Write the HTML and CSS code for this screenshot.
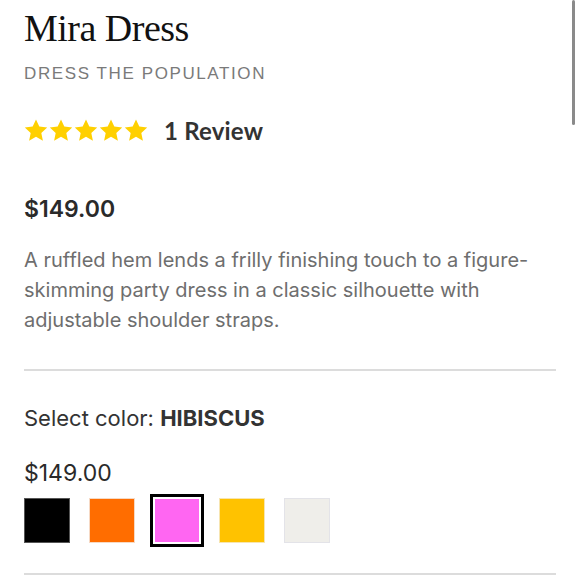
FILE: index.html
```html
<!DOCTYPE html>
<html lang="en">
<head>
<meta charset="utf-8">
<title>Mira Dress</title>
<link rel="stylesheet" href="styles.css">
</head>
<body>
<main class="product">
  <h1 class="title">Mira Dress</h1>
  <div class="brand">DRESS THE POPULATION</div>
  <div class="rating">
    <div class="stars">
      <svg class="star" viewBox="0 0 24 23"><polygon points="12,0.5 15.3,7.6 23.2,8.5 17.3,13.9 18.9,21.8 12,17.8 5.1,21.8 6.7,13.9 0.8,8.5 8.7,7.6"/></svg>
      <svg class="star" viewBox="0 0 24 23"><polygon points="12,0.5 15.3,7.6 23.2,8.5 17.3,13.9 18.9,21.8 12,17.8 5.1,21.8 6.7,13.9 0.8,8.5 8.7,7.6"/></svg>
      <svg class="star" viewBox="0 0 24 23"><polygon points="12,0.5 15.3,7.6 23.2,8.5 17.3,13.9 18.9,21.8 12,17.8 5.1,21.8 6.7,13.9 0.8,8.5 8.7,7.6"/></svg>
      <svg class="star" viewBox="0 0 24 23"><polygon points="12,0.5 15.3,7.6 23.2,8.5 17.3,13.9 18.9,21.8 12,17.8 5.1,21.8 6.7,13.9 0.8,8.5 8.7,7.6"/></svg>
      <svg class="star" viewBox="0 0 24 23"><polygon points="12,0.5 15.3,7.6 23.2,8.5 17.3,13.9 18.9,21.8 12,17.8 5.1,21.8 6.7,13.9 0.8,8.5 8.7,7.6"/></svg>
    </div>
    <span class="reviews">1 Review</span>
  </div>
  <div class="price">$149.00</div>
  <p class="desc">A ruffled hem lends a frilly finishing touch to a figure-skimming party dress in a classic silhouette with adjustable shoulder straps.</p>
  <hr class="divider">
  <div class="select">Select color: <strong class="color-name">HIBISCUS</strong></div>
  <div class="variant-price">$149.00</div>
  <div class="swatches">
    <span class="swatch swatch-black"></span>
    <span class="swatch swatch-orange"></span>
    <span class="swatch swatch-pink is-selected"></span>
    <span class="swatch swatch-yellow"></span>
    <span class="swatch swatch-white"></span>
  </div>
  <hr class="divider divider-bottom">
</main>
<div class="scrollbar"></div>
</body>
</html>
```
FILE: styles.css
```css
html, body {
  margin: 0;
  padding: 0;
  background: #fff;
}
body {
  font-family: Inter, "Liberation Sans", sans-serif;
  color: #2b2b2b;
  overflow: hidden;
}
.product {
  padding: 0 24px;
  display: flex;
  flex-direction: column;
}
.title {
  margin: 6px 0 0;
  font-family: "Liberation Serif", "DejaVu Serif", serif;
  font-weight: 400;
  font-size: 38px;
  line-height: 44px;
  letter-spacing: -0.5px;
  color: #111;
}
.brand {
  margin-top: 14px;
  font-family: "Liberation Sans", Arial, sans-serif;
  font-size: 17px;
  line-height: 20px;
  letter-spacing: 1.6px;
  color: #7a7a7a;
}
.rating {
  margin-top: 34px;
  display: flex;
  align-items: center;
  gap: 16px;
  height: 24px;
}
.stars {
  display: flex;
  gap: 1px;
}
.star {
  width: 24px;
  height: 23px;
  fill: #ffd000;
}
.reviews {
  font-family: Lato, "Open Sans", sans-serif;
  font-weight: 700;
  font-size: 24px;
  letter-spacing: 0.2px;
  color: #333;
}
.price {
  margin-top: 54px;
  font-family: Inter, sans-serif;
  font-weight: 600;
  font-size: 23px;
  line-height: 26px;
  color: #2a2a2a;
}
.desc {
  margin: 23px 0 0;
  font-size: 20px;
  line-height: 30px;
  color: #6e6e6e;
}
.divider {
  margin: 34px 0 0;
  border: 0;
  height: 2px;
  background: #dcdcdc;
}
.select {
  margin-top: 34px;
  font-size: 22px;
  line-height: 26px;
  color: #333;
}
.color-name {
  font-weight: 700;
}
.variant-price {
  margin-top: 28px;
  font-size: 23px;
  line-height: 28px;
  color: #2a2a2a;
}
.swatches {
  margin-top: 11px;
  display: flex;
  gap: 19px;
}
.swatch {
  width: 46px;
  height: 45px;
  box-sizing: border-box;
  border: 1px solid rgba(0, 0, 0, 0.06);
}
.swatch-black { background: #000; border-color: #555; }
.swatch-orange { background: #ff6d00; border-color: #f6d9c4; }
.swatch-pink { background: #ff66f2; }
.swatch-yellow { background: #ffc200; border-color: #f7e5b0; }
.swatch-white { background: #efeeea; border-color: #e3e3e8; }
.is-selected {
  box-shadow: 0 0 0 1px #fff, 0 0 0 4px #000;
  border-color: #fff;
}
.divider-bottom {
  margin-top: 30px;
}
.scrollbar {
  position: fixed;
  top: 0;
  right: 5px;
  width: 3px;
  height: 125px;
  border-radius: 2px;
  background: #8a8a8a;
}
```
